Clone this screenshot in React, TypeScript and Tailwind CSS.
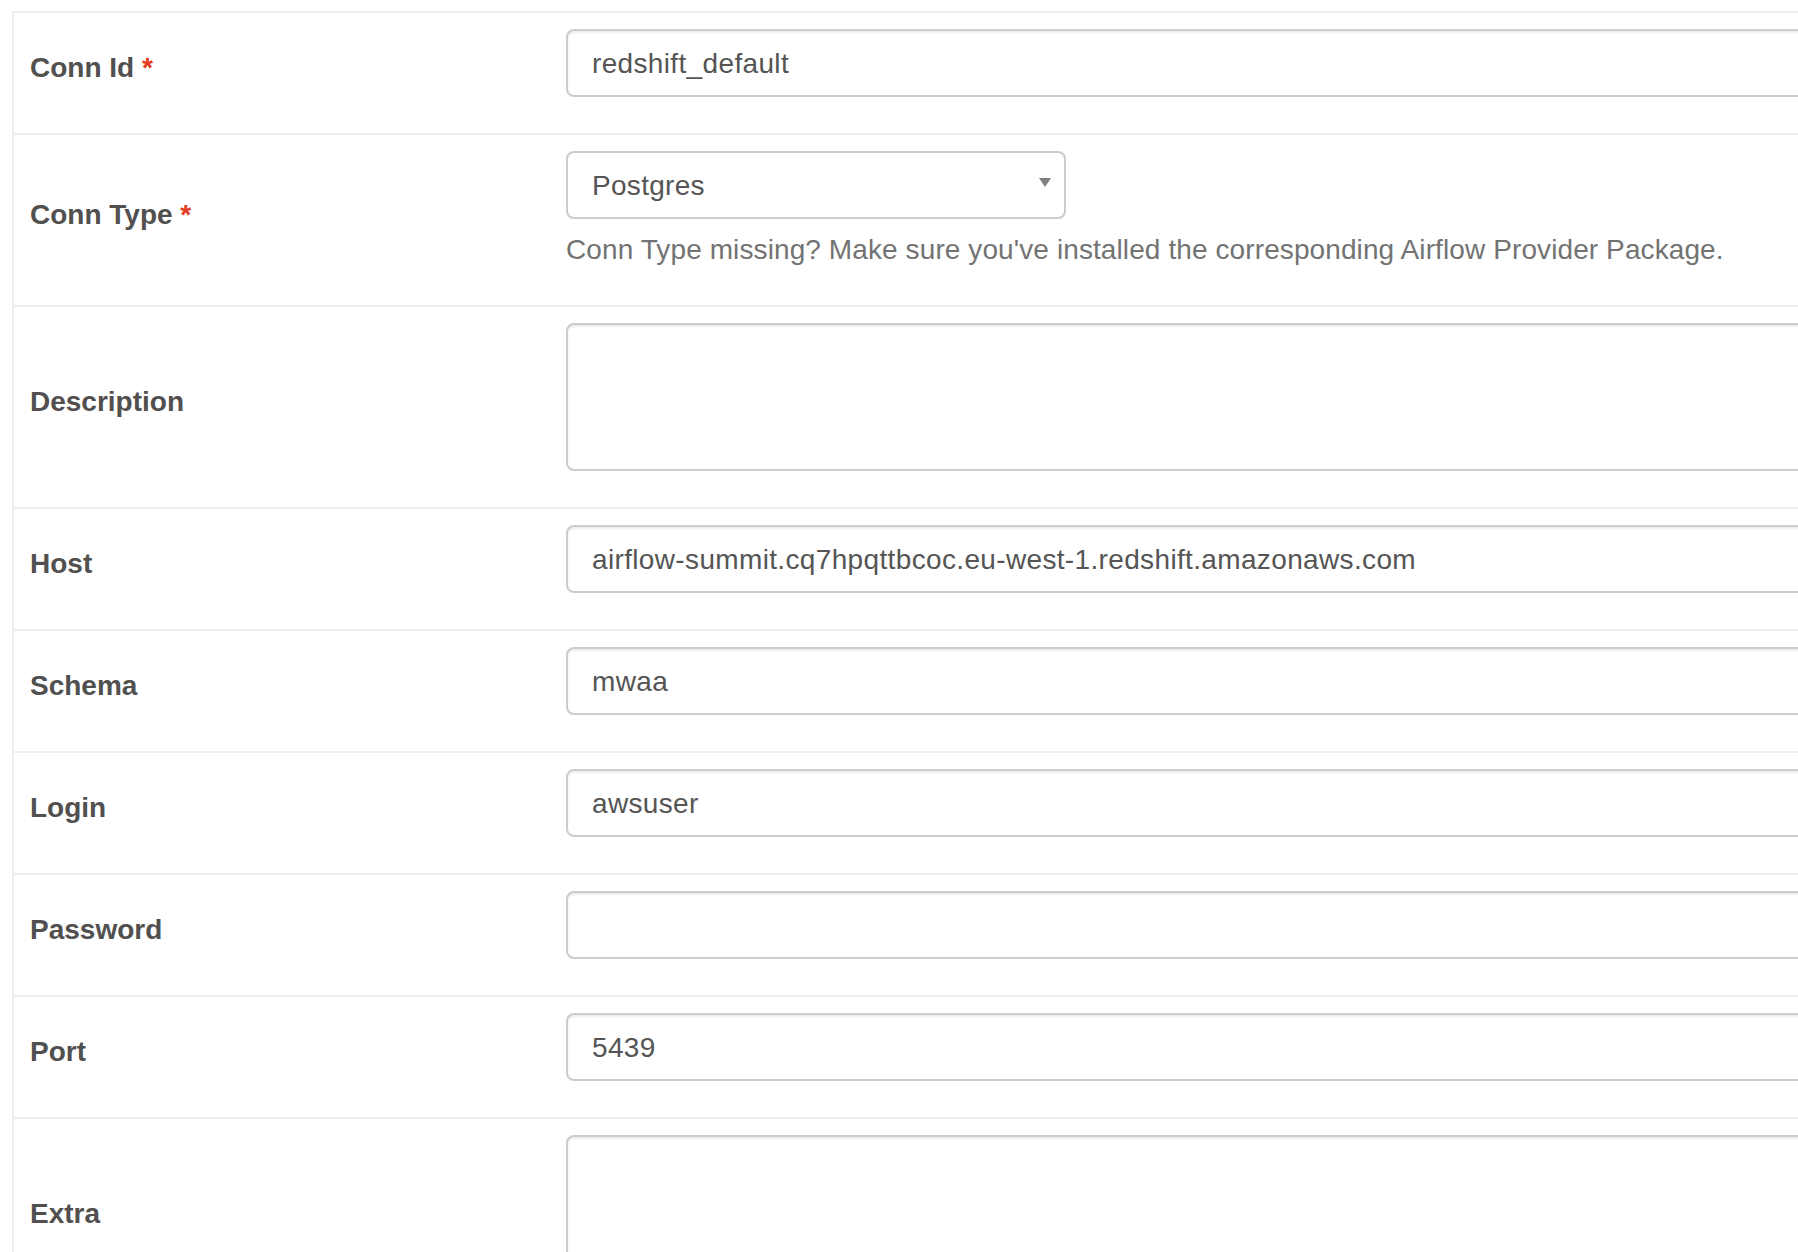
import React from "react";

const FONT = { fontFamily: '"Liberation Sans", Arial, Helvetica, sans-serif' };

function Label({ text, required }: { text: string; required?: boolean }) {
  return (
    <label className="mt-0 mb-[10px] block text-[28px] leading-[40px] font-bold text-[#51504f]">
      {text}
      {required && <span className="text-[#e43921]"> *</span>}
    </label>
  );
}

function Input({ value }: { value?: string }) {
  return (
    <div className="h-[68px] w-full rounded-lg border-2 border-[#ccc] bg-white px-6 pt-[13px] pb-[11px] text-[28px] leading-[40px] tracking-[0.35px] text-[#555] shadow-[inset_0_2px_2px_rgba(0,0,0,0.075)]">
      {value}
    </div>
  );
}

function TextArea({ height }: { height: string }) {
  return (
    <div
      className={`w-full rounded-lg border-2 border-[#ccc] bg-white shadow-[inset_0_2px_2px_rgba(0,0,0,0.075)] ${height}`}
    />
  );
}

function Row({
  label,
  required,
  first,
  children,
}: {
  label: string;
  required?: boolean;
  first?: boolean;
  children: React.ReactNode;
}) {
  return (
    <div className={`flex ${first ? "" : "border-t-2 border-[#eee]"}`}>
      <div className="flex w-[536px] shrink-0 items-center px-4 py-4">
        <Label text={label} required={required} />
      </div>
      <div className="flex-1 px-4 py-4">{children}</div>
    </div>
  );
}

export default function App() {
  return (
    <div className="h-[1252px] w-[1798px] overflow-hidden bg-white pl-[12px] pt-[11px]" style={FONT}>
      <div className="w-[2300px] border-2 border-[#eee]">
        <Row label="Conn Id" required first>
          <div className="mb-5">
            <Input value="redshift_default" />
          </div>
        </Row>
        <Row label="Conn Type" required>
          <div className="relative h-[68px] w-[500px] rounded-lg border-2 border-[#ccc] bg-white px-6 pt-[13px] pb-[11px] text-[28px] leading-[40px] tracking-[0.3px] text-[#555]">
            Postgres
            <svg
              className="absolute right-[13px] top-[25px]"
              width="12"
              height="9"
              viewBox="0 0 12 9"
            >
              <polygon points="0,0 12,0 6,9" fill="#7f7f7f" />
            </svg>
          </div>
          <p className="mt-[11px] mb-[19px] text-[28px] leading-[40px] tracking-[0.1px] text-[#737373]">
            Conn Type missing? Make sure you've installed the corresponding Airflow Provider Package.
          </p>
        </Row>
        <Row label="Description">
          <div className="mb-5">
            <TextArea height="h-[148px]" />
          </div>
        </Row>
        <Row label="Host">
          <div className="mb-5">
            <Input value="airflow-summit.cq7hpqttbcoc.eu-west-1.redshift.amazonaws.com" />
          </div>
        </Row>
        <Row label="Schema">
          <div className="mb-5">
            <Input value="mwaa" />
          </div>
        </Row>
        <Row label="Login">
          <div className="mb-5">
            <Input value="awsuser" />
          </div>
        </Row>
        <Row label="Password">
          <div className="mb-5">
            <Input value="" />
          </div>
        </Row>
        <Row label="Port">
          <div className="mb-5">
            <Input value="5439" />
          </div>
        </Row>
        <Row label="Extra">
          <div className="mb-5">
            <TextArea height="h-[148px]" />
          </div>
        </Row>
      </div>
    </div>
  );
}
